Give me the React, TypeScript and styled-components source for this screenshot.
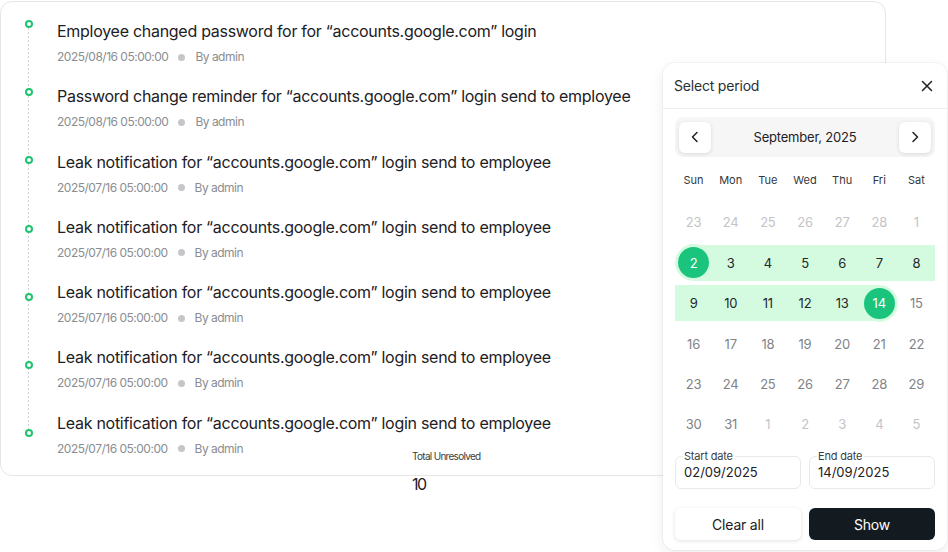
import React from 'react'
import styled, { createGlobalStyle } from 'styled-components'

const GlobalStyle = createGlobalStyle`
  body {
    margin: 0;
    background: #ffffff;
    font-family: Inter, "Noto Sans", sans-serif;
    color: #1f2226;
  }
`

const Page = styled.div`
  position: relative;
  width: 948px;
  height: 552px;
  overflow: hidden;
  background: #ffffff;
`

const Card = styled.div`
  box-sizing: border-box;
  width: 886px;
  margin: 1px 0 0 0;
  padding: 18px 0 18px 0;
  border: 1px solid #e6e6e6;
  border-radius: 12px;
  background: #fff;
  display: grid;
  grid-template-columns: 56px 1fr;
`

const Rail = styled.div`
  position: relative;
  display: flex;
  flex-direction: column;
  align-items: center;
  gap: 60.2px;
  &::before {
    content: '';
    position: absolute;
    left: 27px;
    top: 4px;
    bottom: 20px;
    width: 1px;
    background: repeating-linear-gradient(to bottom, #cfcfcf 0 2px, transparent 2px 4px);
  }
`

const Dot = styled.span`
  position: relative;
  box-sizing: border-box;
  width: 8px;
  height: 8px;
  border-radius: 50%;
  border: 2px solid #1fc46f;
  background: #fff;
`

const Events = styled.div`
  display: flex;
  flex-direction: column;
  gap: 20.3px;
`

const Event = styled.div`
  display: flex;
  flex-direction: column;
  gap: 7px;
`

const Title = styled.div`
  font-size: 16px;
  line-height: 22px;
  letter-spacing: -0.28px;
  color: #1d2024;
`

const Meta = styled.div`
  display: flex;
  align-items: center;
  gap: 10px;
  font-size: 12px;
  line-height: 16px;
  letter-spacing: -0.5px;
  color: #8a8d91;
`

const MetaDot = styled.span`
  width: 7px;
  height: 7px;
  border-radius: 50%;
  background: #c4c6c9;
`

const Total = styled.div`
  position: absolute;
  left: 412px;
  top: 450px;
  display: flex;
  flex-direction: column;
  gap: 13px;
`

const TotalLabel = styled.span`
  font-size: 10px;
  line-height: 12px;
  letter-spacing: -0.7px;
  color: #3a3d41;
`

const TotalValue = styled.span`
  font-size: 16px;
  line-height: 18px;
  letter-spacing: -1.5px;
  color: #1d2024;
`

const Popup = styled.div`
  position: absolute;
  left: 663px;
  top: 63px;
  box-sizing: border-box;
  width: 284px;
  height: 487px;
  background: #fff;
  border-radius: 12px;
  box-shadow: 0 0 0 1px rgba(0, 0, 0, 0.03), 0 4px 14px rgba(0, 0, 0, 0.08);
  display: flex;
  flex-direction: column;
`

const PopupHeader = styled.div`
  height: 46px;
  box-sizing: border-box;
  padding: 0 14px 0 11px;
  display: flex;
  align-items: center;
  justify-content: space-between;
  border-bottom: 1px solid #eeeeee;
  font-size: 14px;
  letter-spacing: -0.2px;
  color: #2c2f33;
`

const CloseButton = styled.button`
  border: 0;
  padding: 0;
  background: none;
  display: flex;
  color: #1d2024;
`

const Body = styled.div`
  padding: 8px 12px 0 12px;
  display: flex;
  flex-direction: column;
`

const MonthNav = styled.div`
  height: 40px;
  box-sizing: border-box;
  padding: 4px;
  border-radius: 8px;
  background: #f6f6f6;
  display: flex;
  align-items: center;
  justify-content: space-between;
  font-size: 13px;
  letter-spacing: -0.2px;
  color: #1d2024;
`

const NavButton = styled.button`
  width: 32px;
  height: 31px;
  border: 0;
  border-radius: 6px;
  background: #fff;
  box-shadow: 0 1px 4px rgba(0, 0, 0, 0.12);
  display: flex;
  align-items: center;
  justify-content: center;
  color: #1d2024;
  padding: 0;
`

const Grid = styled.div`
  display: grid;
  grid-template-columns: repeat(7, 1fr);
  row-gap: 4.4px;
`

const WeekDay = styled.div`
  height: 24px;
  margin: 11px 0 8px 0;
  display: flex;
  align-items: center;
  justify-content: center;
  font-size: 11px;
  color: #34373b;
`

const band = '#d4fbdf'

const DayCell = styled.div<{ $tone: 'faint' | 'muted' | 'range'; $band: 'none' | 'full' | 'right' | 'left' }>`
  height: 36px;
  display: flex;
  align-items: center;
  justify-content: center;
  font-size: 13px;
  letter-spacing: -0.2px;
  color: ${({ $tone }) => ($tone === 'faint' ? '#c3c4c6' : $tone === 'muted' ? '#808387' : '#24272b')};
  background: ${({ $band }) =>
    $band === 'full'
      ? band
      : $band === 'right'
        ? `linear-gradient(to right, transparent 50%, ${band} 50%)`
        : $band === 'left'
          ? `linear-gradient(to right, ${band} 50%, transparent 50%)`
          : 'transparent'};
`

const Selected = styled.span`
  width: 31px;
  height: 31px;
  border-radius: 50%;
  background: #1ac47c;
  box-shadow: 0 0 0 3px #d4fbdf;
  color: #fff;
  display: flex;
  align-items: center;
  justify-content: center;
`

const Fields = styled.div`
  margin-top: 9px;
  display: grid;
  grid-template-columns: 1fr 1fr;
  gap: 8px;
`

const Field = styled.fieldset`
  margin: 0;
  height: 38px;
  box-sizing: border-box;
  padding: 0 8px 0 8px;
  border: 1.5px solid #e9e9e9;
  border-radius: 6px;
  font-size: 13px;
  color: #1d2024;
  line-height: 20px;
`

const FieldLabel = styled.legend`
  padding: 0 2px 0 1px;
  margin-left: -1px;
  font-size: 11px;
  line-height: 11px;
  letter-spacing: -0.2px;
  color: #3a3d41;
`

const Actions = styled.div`
  margin-top: 19px;
  display: grid;
  grid-template-columns: 1fr 1fr;
  gap: 8px;
`

const ActionButton = styled.button<{ $primary?: boolean }>`
  height: 32px;
  border: 0;
  border-radius: 6px;
  font-family: inherit;
  font-size: 14px;
  letter-spacing: -0.2px;
  background: ${({ $primary }) => ($primary ? '#141b20' : '#fff')};
  color: ${({ $primary }) => ($primary ? '#fff' : '#1d2024')};
  box-shadow: ${({ $primary }) => ($primary ? 'none' : '0 1px 4px rgba(0, 0, 0, 0.12)')};
`

const events = [
  { title: 'Employee changed password for for “accounts.google.com” login', date: '2025/08/16 05:00:00' },
  { title: 'Password change reminder for “accounts.google.com” login send to employee', date: '2025/08/16 05:00:00' },
  { title: 'Leak notification for “accounts.google.com” login send to employee', date: '2025/07/16 05:00:00' },
  { title: 'Leak notification for “accounts.google.com” login send to employee', date: '2025/07/16 05:00:00' },
  { title: 'Leak notification for “accounts.google.com” login send to employee', date: '2025/07/16 05:00:00' },
  { title: 'Leak notification for “accounts.google.com” login send to employee', date: '2025/07/16 05:00:00' },
  { title: 'Leak notification for “accounts.google.com” login send to employee', date: '2025/07/16 05:00:00' },
]

type Day = { n: number; tone: 'faint' | 'muted' | 'range'; band: 'none' | 'full' | 'right' | 'left'; sel?: boolean }

const buildDays = (): Day[] => {
  const days: Day[] = []
  ;[23, 24, 25, 26, 27, 28].forEach((n) => days.push({ n, tone: 'faint', band: 'none' }))
  days.push({ n: 1, tone: 'faint', band: 'none' })
  for (let n = 2; n <= 31; n++) {
    if (n > 30) {
      days.push({ n, tone: 'muted', band: 'none' })
    } else if (n === 2) {
      days.push({ n, tone: 'range', band: 'right', sel: true })
    } else if (n === 14) {
      days.push({ n, tone: 'range', band: 'left', sel: true })
    } else if (n < 14) {
      days.push({ n, tone: 'range', band: 'full' })
    } else {
      days.push({ n, tone: 'muted', band: 'none' })
    }
  }
  ;[1, 2, 3, 4, 5].forEach((n) => days.push({ n, tone: 'faint', band: 'none' }))
  return days
}

const Calendar = () => (
  <Grid>
    {['Sun', 'Mon', 'Tue', 'Wed', 'Thu', 'Fri', 'Sat'].map((d) => (
      <WeekDay key={d}>{d}</WeekDay>
    ))}
    {buildDays().map((d, i) => (
      <DayCell key={i} $tone={d.tone} $band={d.band}>
        {d.sel ? <Selected>{d.n}</Selected> : d.n}
      </DayCell>
    ))}
  </Grid>
)

const Chevron = ({ dir }: { dir: 'left' | 'right' }) => (
  <svg width="14" height="14" viewBox="0 0 14 14" fill="none">
    <path
      d={dir === 'left' ? 'M9 2.5L4.5 7L9 11.5' : 'M5 2.5L9.5 7L5 11.5'}
      stroke="currentColor"
      strokeWidth="1.5"
      strokeLinecap="round"
      strokeLinejoin="round"
    />
  </svg>
)

const App: React.FC = () => {
  return (
    <Page>
      <GlobalStyle />
      <Card>
        <Rail>
          {events.map((_, i) => (
            <Dot key={i} />
          ))}
        </Rail>
        <Events>
          {events.map((e, i) => (
            <Event key={i}>
              <Title>{e.title}</Title>
              <Meta>
                <span>{e.date}</span>
                <MetaDot />
                <span>By admin</span>
              </Meta>
            </Event>
          ))}
        </Events>
      </Card>
      <Total>
        <TotalLabel>Total Unresolved</TotalLabel>
        <TotalValue>10</TotalValue>
      </Total>
      <Popup>
        <PopupHeader>
          <span>Select period</span>
          <CloseButton aria-label="close">
            <svg width="12" height="12" viewBox="0 0 12 12" fill="none">
              <path d="M1.5 1.5L10.5 10.5M10.5 1.5L1.5 10.5" stroke="currentColor" strokeWidth="1.5" strokeLinecap="round" />
            </svg>
          </CloseButton>
        </PopupHeader>
        <Body>
          <MonthNav>
            <NavButton aria-label="previous">
              <Chevron dir="left" />
            </NavButton>
            <span>September, 2025</span>
            <NavButton aria-label="next">
              <Chevron dir="right" />
            </NavButton>
          </MonthNav>
          <Calendar />
          <Fields>
            <Field>
              <FieldLabel>Start date</FieldLabel>
              02/09/2025
            </Field>
            <Field>
              <FieldLabel>End date</FieldLabel>
              14/09/2025
            </Field>
          </Fields>
          <Actions>
            <ActionButton>Clear all</ActionButton>
            <ActionButton $primary>Show</ActionButton>
          </Actions>
        </Body>
      </Popup>
    </Page>
  )
}

export default App
